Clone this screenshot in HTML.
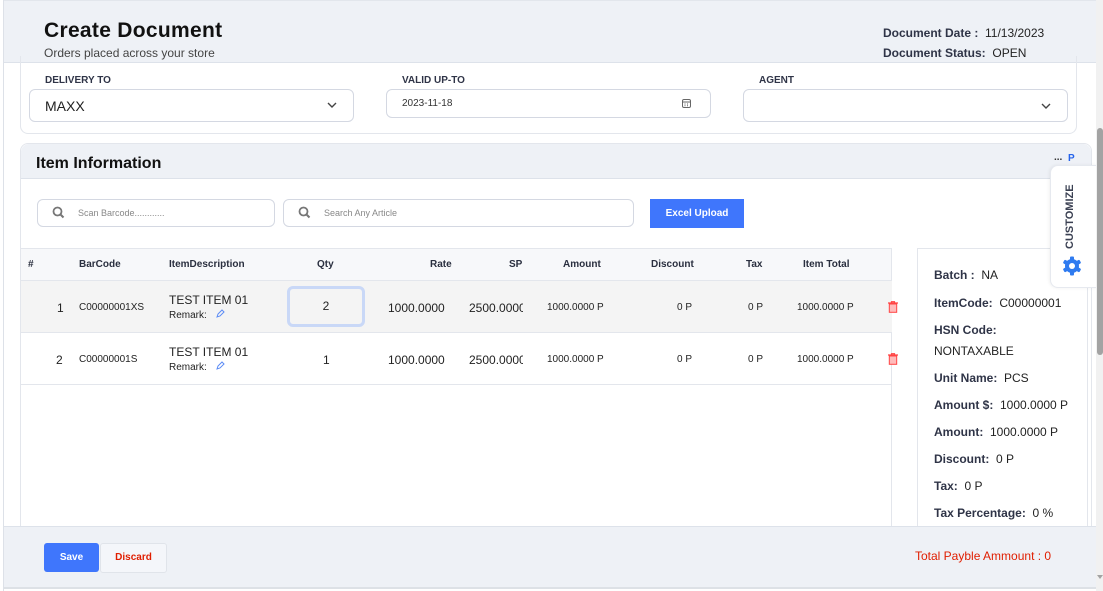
<!DOCTYPE html>
<html><head><meta charset="utf-8"><style>
*{box-sizing:border-box;margin:0;padding:0}
body{width:1103px;height:591px;overflow:hidden;background:#fff;font-family:"Liberation Sans",sans-serif;color:#222;position:relative}
.a{position:absolute;white-space:nowrap}
.b{font-weight:bold}
.lbl{font-size:10px;font-weight:bold;color:#2f3447}
.inp{position:absolute;border:1px solid #d4d8e2;border-radius:6px;background:#fff}
.th{position:absolute;top:259px;font-size:10px;font-weight:bold;color:#2a2f3f}
.td{position:absolute;font-size:12px;color:#222}
.sm{font-size:10px}
.pl{position:absolute;left:934px;font-size:12px;color:#222}
.pl b{color:#2f3447}
</style></head><body>
<div class="a" style="left:3px;top:0;width:1px;height:591px;background:#dde1e8"></div>
<!-- header -->
<div class="a" style="left:4px;top:0;width:1093px;height:63px;background:#eef1f6;border-bottom:1px solid #dde2ea;border-top:1px solid #e2e6ec"></div>
<div class="a b" style="left:44px;top:19px;font-size:21px;color:#111;letter-spacing:0.3px">Create Document</div>
<div class="a" style="left:44px;top:46px;font-size:12px;color:#444">Orders placed across your store</div>
<div class="a" style="left:883px;top:26px;font-size:12px;color:#2f3447"><b>Document Date :</b>&nbsp; <span style="color:#222">11/13/2023</span></div>
<div class="a" style="left:883px;top:46px;font-size:12px;color:#2f3447"><b>Document Status:</b>&nbsp; <span style="color:#222">OPEN</span></div>
<!-- form card -->
<div class="a" style="left:20px;top:56px;width:1057px;height:78px;border:1px solid #e3e6ec;border-top:none;border-radius:0 0 8px 8px"></div>
<div class="a lbl" style="left:45px;top:75px">DELIVERY TO</div>
<div class="a lbl" style="left:402px;top:75px">VALID UP-TO</div>
<div class="a lbl" style="left:759px;top:75px">AGENT</div>
<div class="inp" style="left:29px;top:89px;width:325px;height:33px"></div>
<div class="a" style="left:45px;top:98px;font-size:14px">MAXX</div>
<svg class="a" style="left:327px;top:102px" width="10" height="7" viewBox="0 0 10 7"><path d="M1 1l4 4 4-4" fill="none" stroke="#444" stroke-width="1.4"/></svg>
<div class="inp" style="left:386px;top:89px;width:325px;height:29px"></div>
<div class="a" style="left:402px;top:98px;font-size:10px;color:#333">2023-11-18</div>
<svg class="a" style="left:682px;top:99px" width="9" height="9" viewBox="0 0 9 9"><rect x=".5" y=".5" width="8" height="8" rx="1.5" fill="none" stroke="#666"/><path d="M1 3h7" stroke="#666"/><path d="M2.5 5h1M5 5h1M2.5 6.8h1M5 6.8h1" stroke="#666"/></svg>
<div class="inp" style="left:743px;top:89px;width:325px;height:33px"></div>
<svg class="a" style="left:1041px;top:103px" width="10" height="7" viewBox="0 0 10 7"><path d="M1 1l4 4 4-4" fill="none" stroke="#444" stroke-width="1.4"/></svg>
<!-- item card -->
<div class="a" style="left:20px;top:143px;width:1072px;height:400px;border:1px solid #e3e6ec;border-radius:8px 8px 0 0"></div>
<div class="a" style="left:21px;top:144px;width:1070px;height:35px;background:#eef1f6;border-bottom:1px solid #dde2ea;border-radius:8px 8px 0 0"></div>
<div class="a b" style="left:36px;top:155px;font-size:16px;color:#111">Item Information</div>
<div class="a b" style="left:1054px;top:152px;font-size:10px;color:#333">...</div>
<div class="a b" style="left:1068px;top:153px;font-size:10px;color:#2563eb">P</div>
<div class="inp" style="left:37px;top:199px;width:238px;height:28px"></div>
<div class="inp" style="left:283px;top:199px;width:351px;height:28px"></div>
<svg class="a" style="left:52px;top:206px" width="13" height="13" viewBox="0 0 13 13"><circle cx="5.5" cy="5.5" r="4" fill="none" stroke="#777" stroke-width="1.8"/><path d="M8.5 8.5l3 3" stroke="#777" stroke-width="2"/></svg>
<svg class="a" style="left:298px;top:206px" width="13" height="13" viewBox="0 0 13 13"><circle cx="5.5" cy="5.5" r="4" fill="none" stroke="#777" stroke-width="1.8"/><path d="M8.5 8.5l3 3" stroke="#777" stroke-width="2"/></svg>
<div class="a" style="left:78px;top:208px;font-size:9px;color:#888">Scan Barcode............</div>
<div class="a" style="left:324px;top:208px;font-size:9px;color:#888">Search Any Article</div>
<div class="a b" style="left:650px;top:199px;width:94px;height:29px;background:#3f76fc;color:#fff;font-size:10px;text-align:center;line-height:29px">Excel Upload</div>
<!-- table -->
<div class="a" style="left:21px;top:248px;width:871px;height:33px;background:#f7f8fa;border-top:1px solid #e3e6ec;border-bottom:1px solid #e3e6ec"></div>
<div class="a" style="left:891px;top:248px;width:1px;height:278px;background:#e3e6ec"></div>
<div class="th" style="left:28px">#</div>
<div class="th" style="left:79px">BarCode</div>
<div class="th" style="left:169px">ItemDescription</div>
<div class="th" style="left:317px">Qty</div>
<div class="th" style="left:430px">Rate</div>
<div class="th" style="left:509px">SP</div>
<div class="th" style="left:563px">Amount</div>
<div class="th" style="left:651px">Discount</div>
<div class="th" style="left:746px">Tax</div>
<div class="th" style="left:803px">Item Total</div>
<div class="a" style="left:21px;top:281px;width:871px;height:52px;background:#f4f4f4;border-bottom:1px solid #e3e6ec"></div>
<div class="a" style="left:21px;top:384px;width:871px;height:1px;background:#e3e6ec"></div>
<!-- row 1 -->
<div class="td" style="left:57px;top:301px">1</div>
<div class="td sm" style="left:79px;top:302px">C00000001XS</div>
<div class="td" style="left:169px;top:293px">TEST ITEM 01</div>
<div class="td sm" style="left:169px;top:310px">Remark:</div>
<div class="a" style="left:287px;top:286px;width:78px;height:41px;border:3px solid #c9d8f7;border-radius:6px;background:#f4f4f4;text-align:center;line-height:35px;font-size:12px">2</div>
<div class="td" style="left:388px;top:301px">1000.0000</div>
<div class="td" style="left:469px;top:301px;width:54px;overflow:hidden">2500.0000</div>
<div class="td sm" style="left:547px;top:302px">1000.0000 P</div>
<div class="td sm" style="left:677px;top:302px">0 P</div>
<div class="td sm" style="left:748px;top:302px">0 P</div>
<div class="td sm" style="left:797px;top:302px">1000.0000 P</div>
<!-- row 2 -->
<div class="td" style="left:56px;top:353px">2</div>
<div class="td sm" style="left:79px;top:354px">C00000001S</div>
<div class="td" style="left:169px;top:345px">TEST ITEM 01</div>
<div class="td sm" style="left:169px;top:362px">Remark:</div>
<div class="td" style="left:323px;top:353px">1</div>
<div class="td" style="left:388px;top:353px">1000.0000</div>
<div class="td" style="left:469px;top:353px;width:54px;overflow:hidden">2500.0000</div>
<div class="td sm" style="left:547px;top:354px">1000.0000 P</div>
<div class="td sm" style="left:677px;top:354px">0 P</div>
<div class="td sm" style="left:748px;top:354px">0 P</div>
<div class="td sm" style="left:797px;top:354px">1000.0000 P</div>
<svg class="a" style="left:215px;top:309px" width="10" height="10" viewBox="0 0 10 10"><path d="M2 8l1-3 4-4 2 2-4 4z" fill="none" stroke="#5b8bf5" stroke-width="1"/></svg>
<svg class="a" style="left:215px;top:361px" width="10" height="10" viewBox="0 0 10 10"><path d="M2 8l1-3 4-4 2 2-4 4z" fill="none" stroke="#5b8bf5" stroke-width="1"/></svg>
<svg class="a" style="left:888px;top:301px" width="10" height="12" viewBox="0 0 10 12"><path d="M0 2h10M3.5 2V.7h3V2" stroke="#f44" stroke-width="1.2" fill="none"/><rect x="1.3" y="3" width="7.4" height="8.3" fill="#fbb" stroke="#f44" stroke-width="1"/></svg>
<svg class="a" style="left:888px;top:353px" width="10" height="12" viewBox="0 0 10 12"><path d="M0 2h10M3.5 2V.7h3V2" stroke="#f44" stroke-width="1.2" fill="none"/><rect x="1.3" y="3" width="7.4" height="8.3" fill="#fbb" stroke="#f44" stroke-width="1"/></svg>
<!-- right panel -->
<div class="a" style="left:917px;top:248px;width:171px;height:290px;border:1px solid #e3e6ec"></div>
<div class="pl" style="top:268px"><b>Batch :</b>&nbsp; NA</div>
<div class="pl" style="top:296px"><b>ItemCode:</b>&nbsp; C00000001</div>
<div class="pl" style="top:323px"><b>HSN Code:</b></div>
<div class="pl" style="top:344px">NONTAXABLE</div>
<div class="pl" style="top:371px"><b>Unit Name:</b>&nbsp; PCS</div>
<div class="pl" style="top:398px"><b>Amount $:</b>&nbsp; 1000.0000 P</div>
<div class="pl" style="top:425px"><b>Amount:</b>&nbsp; 1000.0000 P</div>
<div class="pl" style="top:452px"><b>Discount:</b>&nbsp; 0 P</div>
<div class="pl" style="top:479px"><b>Tax:</b>&nbsp; 0 P</div>
<div class="pl" style="top:506px"><b>Tax Percentage:</b>&nbsp; 0 %</div>
<!-- customize tab -->
<div class="a" style="left:1050px;top:165px;width:48px;height:123px;background:#fff;border:1px solid #e6e9ef;border-right:none;border-radius:8px 0 0 8px;box-shadow:-1px 0 3px rgba(0,0,0,.06)"></div>
<div class="a b" style="left:1064px;top:249px;font-size:11px;color:#3a4052;transform:rotate(-90deg);transform-origin:0 0">CUSTOMIZE</div>
<svg class="a" style="left:1062px;top:256px" width="20" height="20" viewBox="0 0 20 20"><g fill="#2f7bf0"><circle cx="10" cy="10" r="7"/><rect x="8" y="0.5" width="4" height="19" rx="1"/><rect x="8" y="0.5" width="4" height="19" rx="1" transform="rotate(60 10 10)"/><rect x="8" y="0.5" width="4" height="19" rx="1" transform="rotate(120 10 10)"/></g><circle cx="10" cy="10" r="3" fill="#fff"/></svg>
<!-- footer -->
<div class="a" style="left:4px;top:526px;width:1093px;height:63px;background:#eef1f6;border-top:1px solid #dde2ea;border-bottom:2px solid #dde1e6"></div>
<div class="a b" style="left:44px;top:543px;width:55px;height:29px;background:#3f76fc;color:#fff;font-size:10px;text-align:center;line-height:29px;border-radius:3px">Save</div>
<div class="a b" style="left:100px;top:543px;width:67px;height:30px;background:#f4f6fa;border:1px solid #e0e4ea;color:#e01e00;font-size:10px;text-align:center;line-height:28px;border-radius:3px">Discard</div>
<div class="a" style="left:915px;top:549px;font-size:12px;color:#e01e00">Total Payble Ammount : 0</div>
<!-- scrollbar -->
<div class="a" style="left:1096px;top:0;width:7px;height:591px;background:#f1f1f1"></div>
<div class="a" style="left:1097px;top:128px;width:6px;height:227px;background:#a3a3a3;border-radius:3px"></div>
<div class="a" style="left:1097px;top:575px;width:0;height:0;border-left:3px solid transparent;border-right:3px solid transparent;border-top:4px solid #a3a3a3"></div>
</body></html>
